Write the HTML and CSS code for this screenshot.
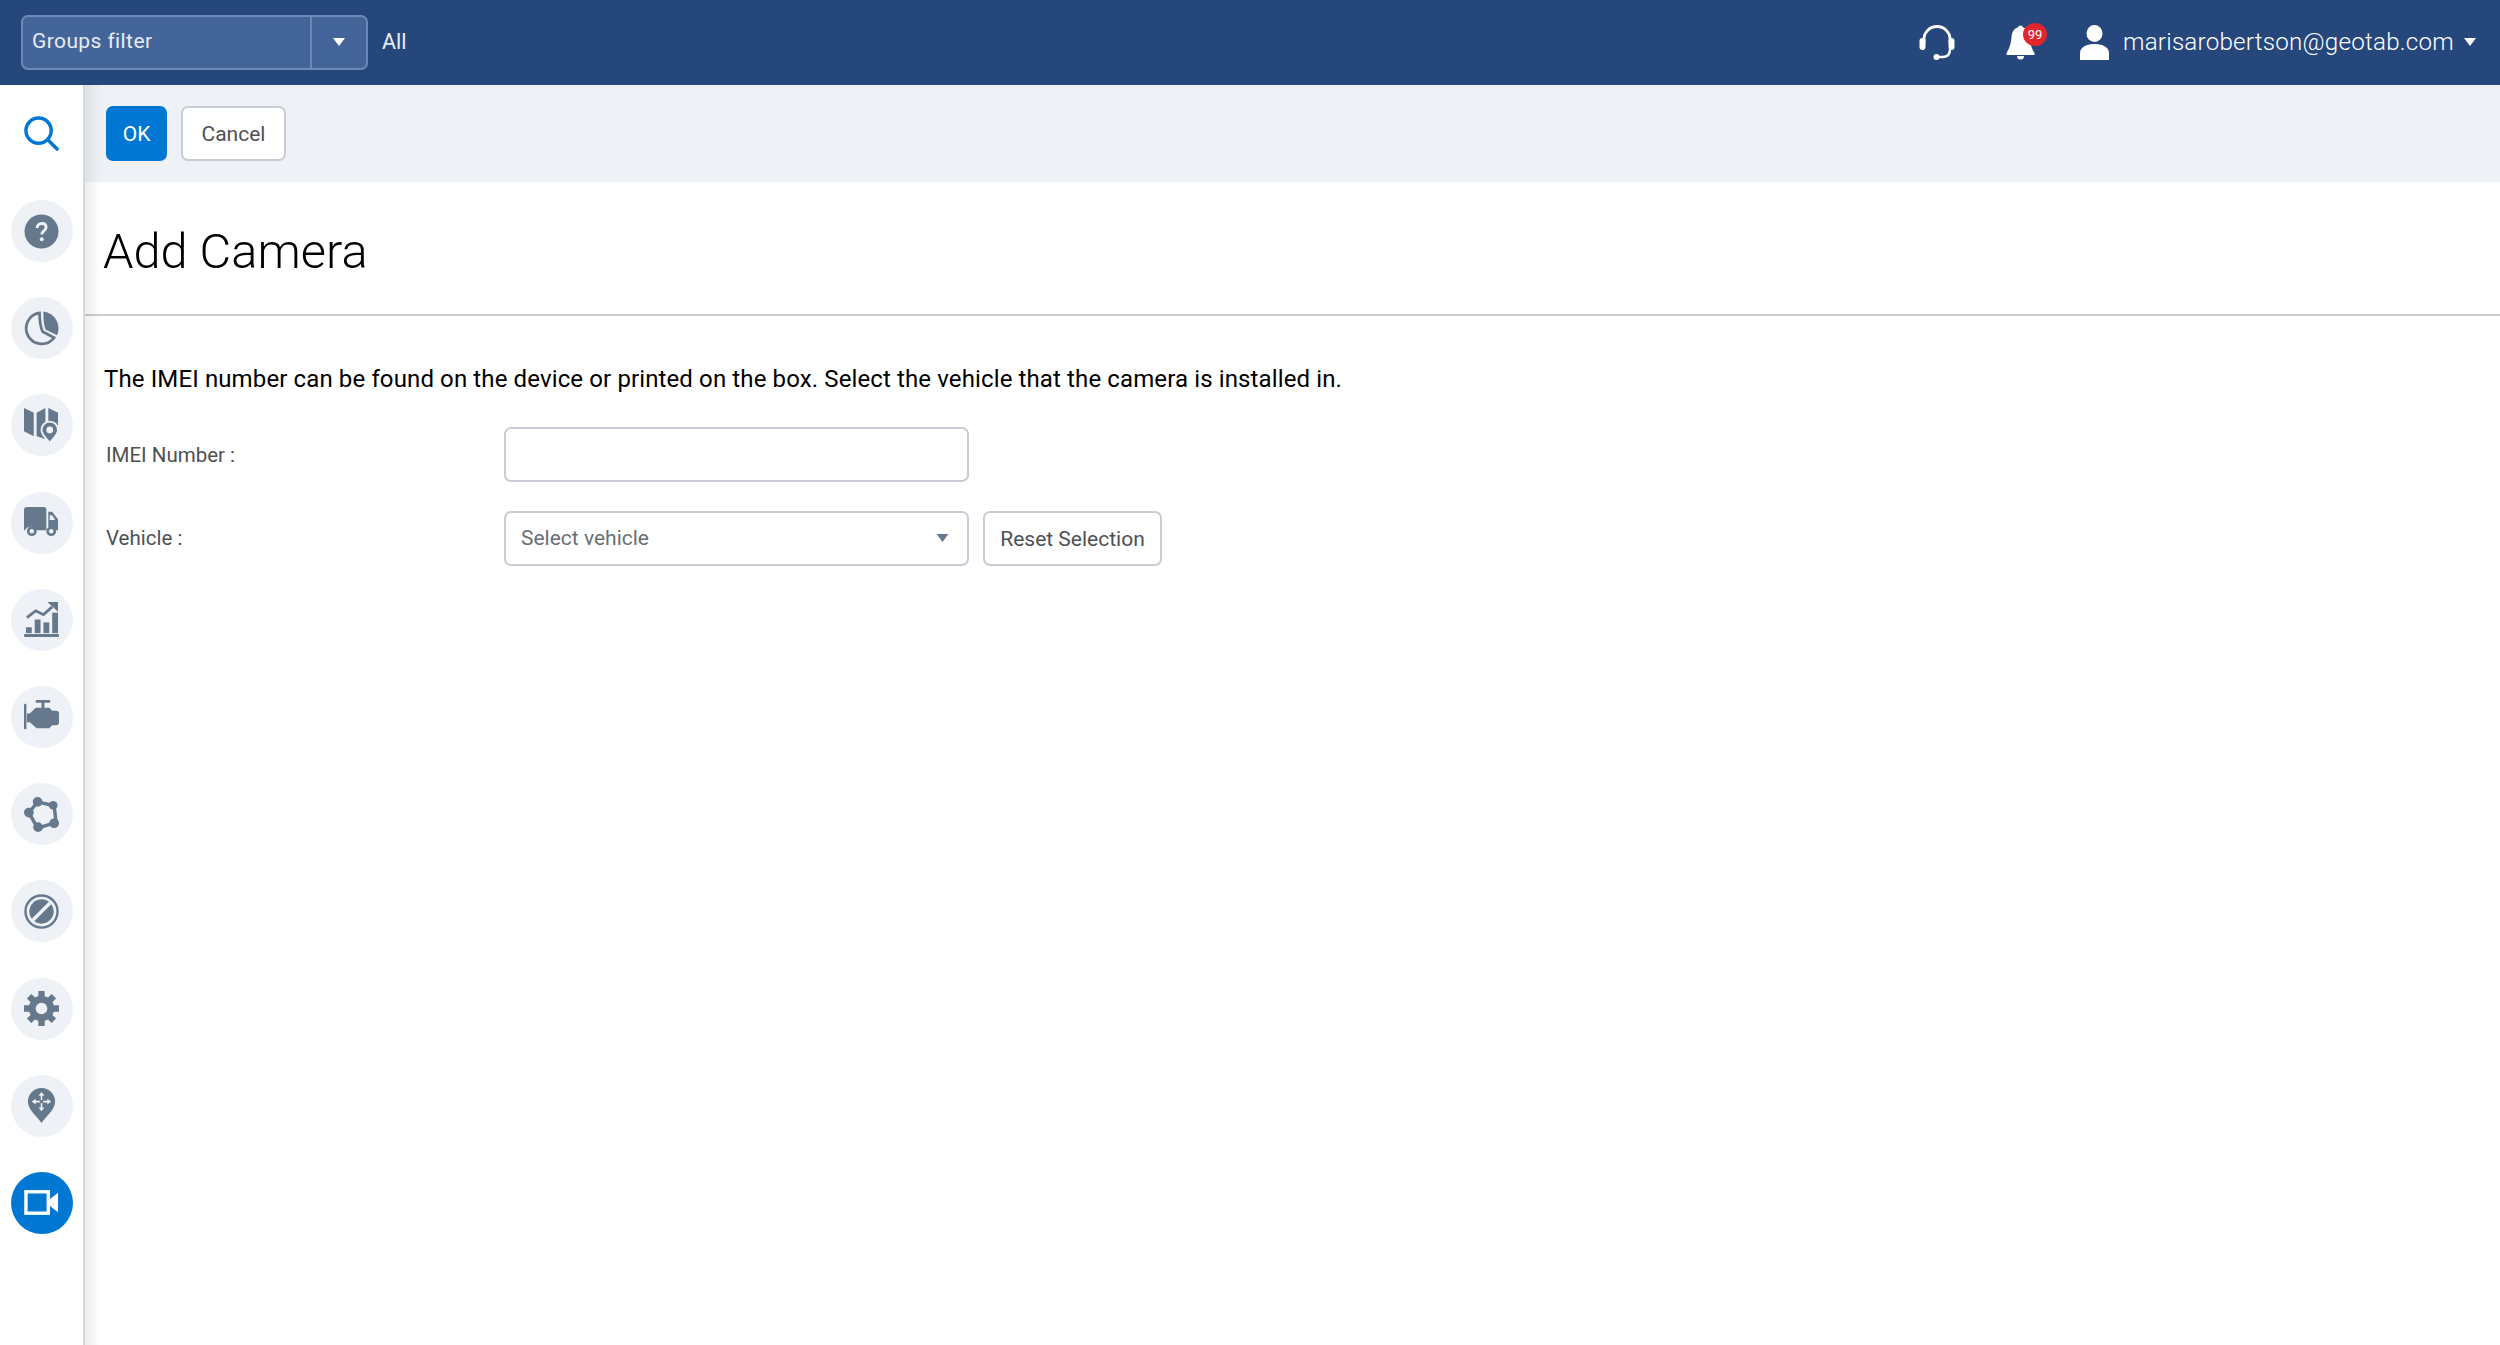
FILE: index.html
```html
<!DOCTYPE html>
<html lang="en">
<head>
<meta charset="utf-8">
<title>Add Camera</title>
<link rel="stylesheet" href="styles.css">
</head>
<body>
<header class="topbar">
  <div class="groups">
    <span class="groups-label">Groups filter</span>
    <span class="groups-toggle"><svg class="caret" viewBox="0 0 12 8"><path d="M0 0h12L6 8z"/></svg></span>
  </div>
  <span class="groups-all">All</span>
  <div class="top-right">
    <svg class="headset" viewBox="0 0 36 35" fill="none" stroke="#fff">
      <path d="M5 18V14a13 12.500 0 0 1 26 0v4" stroke-width="2.800"/>
      <rect x="0.500" y="13" width="6" height="12" rx="3" fill="#fff" stroke="none"/>
      <rect x="29.500" y="13" width="6" height="12" rx="3" fill="#fff" stroke="none"/>
      <path d="M31 24c0 6-3 8-7 8h-6" stroke-width="2.400"/>
      <circle cx="17.500" cy="32" r="3" fill="#fff" stroke="none"/>
    </svg>
    <div class="bell">
      <svg class="bell-icon" viewBox="0 0 29 35" fill="#fff">
        <circle cx="14.500" cy="3" r="2.500"/>
        <path d="M14.500 2C9 2 6 6 5.500 12c-.5 7-2 11-5 16v2h28v-2c-3-5-4.500-9-5-16C23 6 20 2 14.500 2z"/>
        <path d="M11 31h7a3.500 3.500 0 0 1-7 0z"/>
      </svg>
      <span class="badge">99</span>
    </div>
    <svg class="user" viewBox="0 0 29 35" fill="#fff">
      <ellipse cx="14.500" cy="8.500" rx="8" ry="8.500"/>
      <path d="M0 35v-7c0-5 5-9 14.500-9S29 23 29 28v7z"/>
    </svg>
    <span class="email">marisarobertson@geotab.com</span>
    <svg class="caret caret-user" viewBox="0 0 12 8"><path d="M0 0h12L6 8z"/></svg>
  </div>
</header>
<div class="body-row">
  <nav class="sidebar">
    <svg class="search" viewBox="0 0 36 36" fill="none" stroke="#0078d3" stroke-width="3.600">
      <circle cx="15" cy="15" r="13"/>
      <path d="M24.500 24.500l9.500 9.500" stroke-linecap="round"/>
    </svg>
    <ul class="nav-list">
      <li class="nav-item">
        <svg class="nav-icon" viewBox="0 0 36 36"><circle cx="18" cy="18" r="17.500" fill="#66788c"/><path d="M13.500 14.500c0-3 2-4.800 4.700-4.800s4.500 1.600 4.500 4c0 3.800-4.400 3.600-4.400 7.300" fill="none" stroke="#eef1f6" stroke-width="3"/><circle cx="18.300" cy="26" r="2" fill="#eef1f6"/></svg>
      </li>
      <li class="nav-item">
        <svg class="nav-icon" viewBox="0 0 36 36"><path d="M20 0.500A17.500 17.500 0 0 1 34 25L22 19c-2-6-2-12-2-18.500z" fill="#66788c"/><path d="M16 2a16 16 0 1 0 15 25.500L19 21C16.500 15 16 9 16 2z" fill="none" stroke="#66788c" stroke-width="2.800"/></svg>
      </li>
      <li class="nav-item">
        <svg class="nav-icon" viewBox="0 0 36 36" fill="#66788c"><path d="M0 0l10 5v24L0 24zM13 5l9-5v32l-9-3zM25 0l10 5v13H25z"/><path d="M26.500 14a8.500 8.500 0 0 1 8.500 8.500c0 4.500-4 8-8.500 13.500-4.500-5.500-8.500-9-8.500-13.500a8.500 8.500 0 0 1 8.500-8.500z" stroke="#eef1f6" stroke-width="2"/><circle cx="26.500" cy="22.500" r="3.500" fill="#eef1f6"/></svg>
      </li>
      <li class="nav-item">
        <svg class="nav-icon" viewBox="0 0 36 36"><path d="M3 2h17a3 3 0 0 1 3 3v21H12a6 6 0 0 0-11 0H0V5a3 3 0 0 1 3-3z" fill="#66788c"/><path d="M25 7h4l6 8v11h-2a6 6 0 0 0-8-3z" fill="#66788c"/><path d="M26.500 10.500h2.500l3 5h-5.500z" fill="#eef1f6"/><circle cx="8" cy="27" r="5" fill="#66788c"/><circle cx="8" cy="27" r="2.300" fill="#eef1f6"/><circle cx="28" cy="27" r="5" fill="#66788c"/><circle cx="28" cy="27" r="2.300" fill="#eef1f6"/></svg>
      </li>
      <li class="nav-item">
        <svg class="nav-icon" viewBox="0 0 36 36" fill="#66788c"><path d="M3 16l9-7 8 4 9-8" fill="none" stroke="#66788c" stroke-width="2.800"/><path d="M24 0h11v10z"/><rect x="2" y="26" width="6" height="6"/><rect x="11" y="18" width="6" height="14"/><rect x="20" y="21" width="6" height="11"/><rect x="29" y="11" width="6" height="21"/><rect x="0" y="33" width="36" height="3" rx="1"/></svg>
      </li>
      <li class="nav-item">
        <svg class="nav-icon" viewBox="0 0 36 36" fill="#66788c"><rect x="0" y="5" width="2.500" height="26" rx="1"/><path d="M3 15h3l6-6h14l3 3h4a3 3 0 0 1 3 3v9a3 3 0 0 1-3 3h-4l-3 3H13l-7-6H3z"/><rect x="12" y="1" width="15" height="2.800" rx="1"/><rect x="18" y="3" width="3" height="7"/></svg>
      </li>
      <li class="nav-item">
        <svg class="nav-icon" viewBox="0 0 36 36"><path d="M14 5l17 4 2 17-19 6L5 16z" fill="none" stroke="#66788c" stroke-width="3.500"/><g fill="#66788c"><circle cx="14" cy="5" r="5"/><circle cx="30" cy="8.500" r="4.500"/><circle cx="5" cy="16" r="5"/><circle cx="31" cy="27" r="5"/><circle cx="14.500" cy="31" r="5"/></g></svg>
      </li>
      <li class="nav-item">
        <svg class="nav-icon" viewBox="0 0 36 36"><circle cx="18" cy="18" r="16.500" fill="none" stroke="#66788c" stroke-width="2.400"/><circle cx="18" cy="18" r="12.500" fill="#66788c"/><path d="M9 27L27 9" stroke="#eef1f6" stroke-width="3.500"/></svg>
      </li>
      <li class="nav-item">
        <svg class="nav-icon" viewBox="0 0 36 36"><g stroke="#66788c" stroke-width="6.500"><path d="M18 0v36M0 18h36M5.300 5.300l25.400 25.400M30.700 5.300L5.300 30.700"/></g><circle cx="18" cy="18" r="13" fill="#66788c"/><circle cx="18" cy="18" r="6" fill="#eef1f6"/></svg>
      </li>
      <li class="nav-item">
        <svg class="nav-icon" viewBox="0 0 36 36"><path d="M18 0a14 14 0 0 1 14 14c0 8-8 14-14 22C12 28 4 22 4 14A14 14 0 0 1 18 0z" fill="#66788c"/><path d="M18 6v16M10 14h16" stroke="#eef1f6" stroke-width="1.600"/><g fill="#eef1f6"><path d="M18 4l3 4h-6zM18 24l-3-4h6zM8 14l4-3v6zM28 14l-4-3v6z"/></g><circle cx="18" cy="14" r="1.800" fill="#66788c"/></svg>
      </li>
      <li class="nav-item is-active">
        <svg class="nav-icon" viewBox="0 0 36 36"><rect x="2" y="7" width="23" height="22" fill="none" stroke="#fff" stroke-width="3.500"/><path d="M26 15l9-7v20l-9-7z" fill="#fff"/></svg>
      </li>
    </ul>
  </nav>
  <main class="main">
    <div class="toolbar">
      <button class="btn btn-primary">OK</button>
      <button class="btn btn-cancel">Cancel</button>
    </div>
    <div class="title-block"><h1 class="title">Add Camera</h1></div>
    <section class="content">
      <p class="intro">The IMEI number can be found on the device or printed on the box. Select the vehicle that the camera is installed in.</p>
      <div class="form-row">
        <label class="form-label">IMEI Number :</label>
        <input class="field" type="text">
      </div>
      <div class="form-row">
        <label class="form-label">Vehicle :</label>
        <div class="field field-select">
          <span>Select vehicle</span>
          <svg class="caret caret-select" viewBox="0 0 12 8"><path d="M0 0h12L6 8z"/></svg>
        </div>
        <button class="btn btn-reset">Reset Selection</button>
      </div>
    </section>
  </main>
</div>
</body>
</html>
```
FILE: styles.css
```css
* { box-sizing: border-box; }
html, body { height: 100%; }
body {
  margin: 0;
  height: 1345px;
  overflow: hidden;
  display: flex;
  flex-direction: column;
  background: #fff;
  color: #000;
  font-family: Roboto, "Liberation Sans", sans-serif;
}
.topbar {
  height: 85px;
  flex: none;
  background: #25477b;
  display: flex;
  align-items: center;
  padding: 0 24px 0 21px;
  color: #fff;
}
.groups {
  width: 347px;
  height: 55px;
  display: flex;
  border: 2px solid #6e8ab4;
  border-radius: 7px;
  background: #44659a;
  margin-top: -1px;
}
.groups-label {
  flex: 1;
  padding-left: 9px;
  line-height: 49px;
  font-size: 21px;
  letter-spacing: 0.4px;
  color: #e8edf4;
}
.groups-toggle {
  width: 56px;
  border-left: 2px solid #6e8ab4;
  display: flex;
  align-items: center;
  justify-content: center;
}
.caret { width: 12px; height: 8px; fill: #fff; display: block; }
.groups-all { margin: -3px 0 0 14px; font-size: 21.5px; color: #e8edf4; }
.top-right { margin-left: auto; display: flex; align-items: center; }
.headset { width: 36px; height: 35px; display: block; }
.bell { position: relative; margin-left: 51px; }
.bell-icon { width: 29px; height: 35px; display: block; }
.badge {
  position: absolute;
  top: -2px;
  right: -12px;
  width: 24px;
  height: 23px;
  border-radius: 50%;
  background: #e1252c;
  color: #fff;
  font-size: 13px;
  line-height: 23px;
  text-align: center;
}
.user { margin-left: 45px; width: 29px; height: 35px; display: block; }
.email { margin: -1px 0 0 14px; font-size: 24.2px; font-weight: 300; letter-spacing: 0.22px; }
.caret-user { margin: -2px 0 0 10px; }
.body-row { flex: 1; display: flex; min-height: 0; }
.sidebar {
  width: 83px;
  flex: none;
  display: flex;
  flex-direction: column;
  align-items: center;
}
.search { width: 35px; height: 35px; margin: 31px 0 49px; }
.nav-list {
  list-style: none;
  margin: 0;
  padding: 0;
  display: flex;
  flex-direction: column;
  gap: 35.2px;
}
.nav-item {
  width: 62px;
  height: 62px;
  border-radius: 50%;
  background: #eef1f6;
  display: flex;
  align-items: center;
  justify-content: center;
}
.nav-item.is-active { background: #0078d3; }
.nav-icon { width: 35px; height: 35px; display: block; }
.main {
  flex: 1;
  min-width: 0;
  border-left: 2px solid #d4d8df;
  position: relative;
}
.main::before {
  content: "";
  position: absolute;
  left: 0;
  top: 0;
  bottom: 0;
  width: 16px;
  background: linear-gradient(to right, rgba(0,0,0,.07), rgba(0,0,0,0));
  pointer-events: none;
}
.toolbar {
  height: 97px;
  background: #eef1f6;
  display: flex;
  align-items: center;
  gap: 14px;
  padding-left: 21px;
  padding-bottom: 1px;
}
.btn {
  font-family: inherit;
  font-size: 21px;
  height: 55px;
  border-radius: 7px;
  padding: 2px 0 0;
  background: #fff;
  border: 2px solid #c8ccd3;
  color: #4e5154;
}
.btn-primary { width: 61px; background: #0078d3; border-color: #0078d3; color: #fff; }
.btn-cancel { width: 105px; }
.btn-reset { width: 179px; margin-left: 14px; }
.title-block {
  height: 134px;
  border-bottom: 2px solid #c9ccd1;
  display: flex;
  align-items: center;
  padding: 6px 0 0 18px;
}
.title { margin: 0; font-size: 48.8px; font-weight: 300; }
.content { padding: 49px 0 0 19px; }
.intro { margin: 0 0 34px; font-size: 24px; line-height: 28px; letter-spacing: 0.12px; }
.form-row { display: flex; align-items: center; margin-bottom: 28.5px; }
.form-label { width: 400px; padding-left: 2px; font-size: 20.5px; color: #4e5154; }
.field {
  width: 465px;
  height: 55px;
  border: 2px solid #c7ccd6;
  border-radius: 7px;
  background: #fff;
  margin: 0;
  padding: 0;
}
.field-select {
  display: flex;
  align-items: center;
  justify-content: space-between;
  padding: 0 18px 0 15px;
  font-size: 21px;
  color: #6b6f73;
}
.caret-select { width: 13px; fill: #66788c; }
```
